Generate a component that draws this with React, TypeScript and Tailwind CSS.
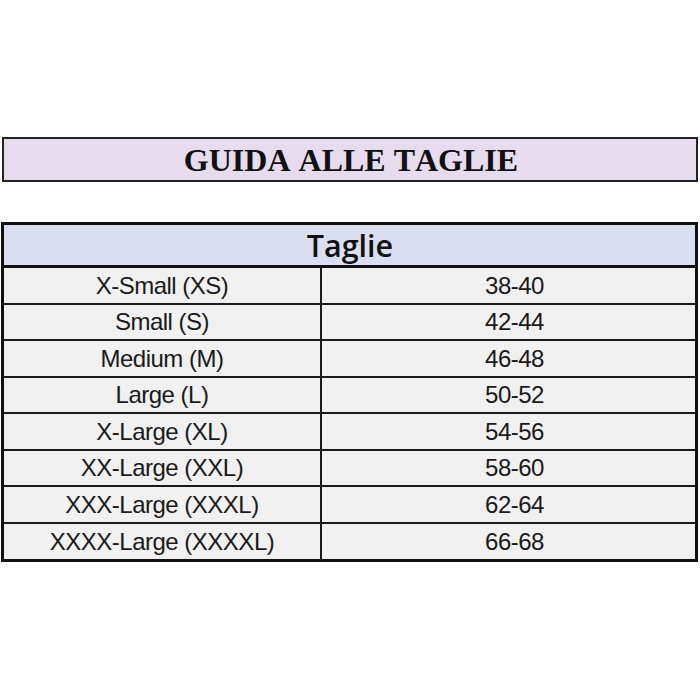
import React from "react";

const rows: [string, string][] = [
  ["X-Small (XS)", "38-40"],
  ["Small (S)", "42-44"],
  ["Medium (M)", "46-48"],
  ["Large (L)", "50-52"],
  ["X-Large (XL)", "54-56"],
  ["XX-Large (XXL)", "58-60"],
  ["XXX-Large (XXXL)", "62-64"],
  ["XXXX-Large (XXXXL)", "66-68"],
];

export default function App() {
  return (
    <div className="w-[700px] h-[700px] bg-white pt-[137px] flex flex-col">
      <div className="ml-[2px] w-[696px] h-[45px] border-2 border-[#222] bg-[#e6dcee] flex items-center justify-center">
        <span className="font-['Liberation_Serif',serif] font-bold text-[32px] leading-none text-[#111] mt-[1px] ml-[2px] [font-kerning:none]">
          GUIDA ALLE TAGLIE
        </span>
      </div>
      <div className="mt-[40px] ml-[1px] w-[697px] border-[3px] border-[#111] flex flex-col">
        <div className="h-[43px] bg-[#d9dff0] border-b-[3px] border-[#111] flex items-center justify-center">
          <span className="font-['Open_Sans',sans-serif] font-semibold text-[30.5px] leading-none text-[#111] ml-[1px]">
            Taglie
          </span>
        </div>
        {rows.map(([size, num], i) => (
          <div
            key={size}
            className={
              i < rows.length - 1
                ? "grid grid-cols-[318px_1fr] h-[36.5px] bg-[#f0f0f0] border-b-2 border-[#1a1a1a]"
                : "grid grid-cols-[318px_1fr] h-[35.5px] bg-[#f0f0f0]"
            }
          >
            <div className="border-r-2 border-[#1a1a1a] flex items-center justify-center pt-[1px] font-['Liberation_Sans',Arial,sans-serif] text-[24px] tracking-[-0.5px] leading-none text-[#1a1a1a]">
              {size}
            </div>
            <div className="flex items-center justify-center pt-[1px] pl-[12px] font-['Liberation_Sans',Arial,sans-serif] text-[24px] tracking-[-0.5px] leading-none text-[#1a1a1a]">
              {num}
            </div>
          </div>
        ))}
      </div>
    </div>
  );
}
